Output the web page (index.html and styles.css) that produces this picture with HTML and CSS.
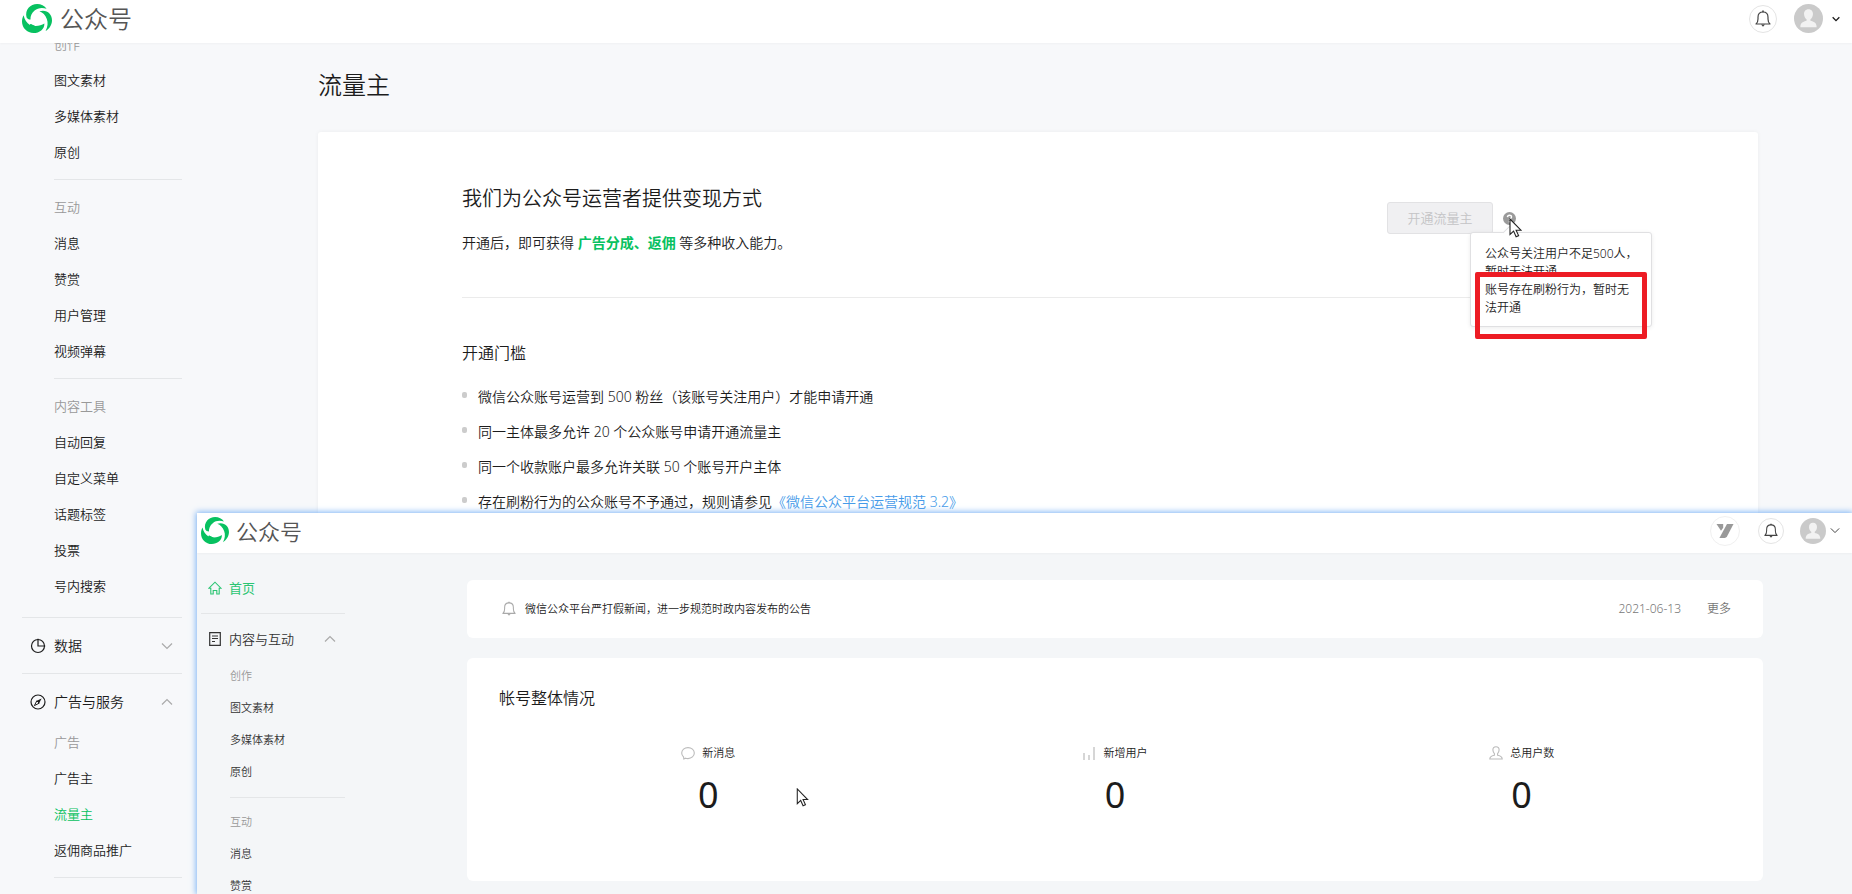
FILE: index.html
```html
<!DOCTYPE html>
<html lang="zh-CN">
<head>
  <meta charset="UTF-8">
  <title>公众号 - 流量主</title>
  <link rel="stylesheet" href="styles.css">
</head>
<body>
  <!-- shared icons -->
  <svg class="sprite" aria-hidden="true">
    <symbol id="icon-logo" viewBox="0 0 30 29">
      <path d="M4.6 13.4C2.6 5.8 8.4 0 15.2 0c3.8 0 7.400 1.800 9.400 4.800C20 3.400 15.600 4 12.600 6.600 9.600 9.100 8.300 12.400 8.500 15.600 6.600 15.400 5.300 14.700 4.600 13.400Z"/>
      <path d="M17.400 7.200C24.600 5 30 9.600 30 16.200c0 4.600-2.600 8.600-6.400 10.800 2.200-4.200 2.600-8.400 1.200-12C23.400 11 20.800 8.400 17.400 7.200Z"/>
      <path d="M1.600 11.200C2.400 15.500 4.800 18.800 8 20.900l.6-.9 4.200 1.900c3.800.2 7-.9 9.600-2.500.2 5.800-5 9.600-10.800 9.600C5 29 0 24 0 17.600c0-2.400.6-4.600 1.600-6.400Z"/>
      <path d="M7.400 24.600 8.400 20l6 2.600Z"/>
    </symbol>
    <symbol id="icon-bell" viewBox="0 0 16 18">
      <path d="M1 14C2.600 12.800 3 11.200 3 9V7.200C3 4 5 2 8 2s5 2 5 5.200V9c0 2.200.4 3.800 2 5Z" fill="none" stroke="currentColor" stroke-width="1.200" stroke-linejoin="round"/>
      <path d="M7.200.6h1.600v1.600H7.200zM6 14.400h4L8 16.800Z" fill="currentColor"/>
    </symbol>
    <symbol id="icon-avatar" viewBox="0 0 30 30">
      <circle cx="15" cy="15" r="15" fill="#cacaca"/>
      <path d="M15 5.500c-3 0-4.800 2.200-4.600 5.200.1 2.200 1.200 4.200 2.600 5.200v1.500c-3.400.8-6.400 2-6.400 6.600h16.800c0-4.600-3-5.800-6.400-6.600v-1.500c1.400-1 2.500-3 2.600-5.200.2-3-1.600-5.200-4.600-5.200Z" fill="#f2f2f2"/>
    </symbol>
    <symbol id="icon-down" viewBox="0 0 12 8">
      <path d="M1 1.500 6 6.500l5-5" fill="none" stroke="currentColor" stroke-width="1.200"/>
    </symbol>
    <symbol id="icon-caret" viewBox="0 0 12 8">
      <path d="M1 1.500 6 6.500l5-5" fill="none" stroke="currentColor" stroke-width="2"/>
    </symbol>
    <symbol id="icon-up" viewBox="0 0 12 8">
      <path d="M1 6.500 6 1.500l5 5" fill="none" stroke="currentColor" stroke-width="1.200"/>
    </symbol>
    <symbol id="icon-cursor" viewBox="0 0 13 20">
      <path d="M1 1v15.500l3.600-3.400 2.500 5.600 2.500-1.100-2.500-5.400h4.800Z" fill="#fff" stroke="#222" stroke-width="1.100"/>
    </symbol>
  </svg>

  <header class="header">
    <a class="brand" href="#"><svg class="brand-logo"><use href="#icon-logo"/></svg>公众号</a>
    <div class="header-tools">
      <button class="round-btn" aria-label="通知"><svg class="bell"><use href="#icon-bell"/></svg></button>
      <button class="account" aria-label="账号"><svg class="avatar"><use href="#icon-avatar"/></svg><svg class="caret"><use href="#icon-caret"/></svg></button>
    </div>
  </header>

  <div class="layout">
    <nav class="menu">
      <ul class="menu-group">
        <li class="menu-label">创作</li>
        <li><a href="#">图文素材</a></li>
        <li><a href="#">多媒体素材</a></li>
        <li><a href="#">原创</a></li>
      </ul>
      <ul class="menu-group">
        <li class="menu-label">互动</li>
        <li><a href="#">消息</a></li>
        <li><a href="#">赞赏</a></li>
        <li><a href="#">用户管理</a></li>
        <li><a href="#">视频弹幕</a></li>
      </ul>
      <ul class="menu-group last">
        <li class="menu-label">内容工具</li>
        <li><a href="#">自动回复</a></li>
        <li><a href="#">自定义菜单</a></li>
        <li><a href="#">话题标签</a></li>
        <li><a href="#">投票</a></li>
        <li><a href="#">号内搜索</a></li>
      </ul>
      <button class="menu-title">
        <svg class="menu-icon" viewBox="0 0 16 16"><path d="M8 .8V8h7.200" fill="none" stroke="currentColor" stroke-width="1.200"/><circle cx="8" cy="8" r="6.500" fill="none" stroke="currentColor" stroke-width="1.200"/></svg>
        <span>数据</span>
        <svg class="fold"><use href="#icon-down"/></svg>
      </button>
      <button class="menu-title">
        <svg class="menu-icon" viewBox="0 0 16 16"><circle cx="8" cy="8" r="7" fill="none" stroke="currentColor" stroke-width="1.200"/><path d="M11.600 4.400 9.200 9.200 6.800 6.800Z" fill="currentColor"/><path d="M4.400 11.600 6.800 6.800 9.200 9.200Z" fill="none" stroke="currentColor"/></svg>
        <span>广告与服务</span>
        <svg class="fold"><use href="#icon-up"/></svg>
      </button>
      <ul class="menu-group nested">
        <li class="menu-label">广告</li>
        <li><a href="#">广告主</a></li>
        <li><a class="active" href="#">流量主</a></li>
        <li><a href="#">返佣商品推广</a></li>
      </ul>
    </nav>

    <main class="main">
      <h1 class="page-title">流量主</h1>
      <section class="panel">
        <div class="intro">
          <div>
            <h2>我们为公众号运营者提供变现方式</h2>
            <p>开通后，即可获得 <strong>广告分成、返佣</strong> 等多种收入能力。</p>
          </div>
          <div class="apply">
            <button class="apply-btn" disabled>开通流量主</button>
            <div class="help">
              <svg class="help-icon" viewBox="0 0 14 14"><circle cx="7" cy="7" r="7" fill="#9a9a9a"/><path d="M4.800 5.500C4.900 2.800 9.200 2.800 9.200 5.400 9.200 7 7 7 7 8.600M7 9.800v1.400" fill="none" stroke="#fff" stroke-width="1.500"/></svg>
              <div class="popover">
                <p>公众号关注用户不足500人，暂时无法开通</p>
                <p>账号存在刷粉行为，暂时无法开通</p>
                <div class="mark"></div>
              </div>
              <svg class="cursor"><use href="#icon-cursor"/></svg>
            </div>
          </div>
        </div>
        <div class="rules">
          <h3>开通门槛</h3>
          <ul>
            <li>微信公众账号运营到 500 粉丝（该账号关注用户）才能申请开通</li>
            <li>同一主体最多允许 20 个公众账号申请开通流量主</li>
            <li>同一个收款账户最多允许关联 50 个账号开户主体</li>
            <li>存在刷粉行为的公众账号不予通过，规则请参见<a href="#">《微信公众平台运营规范 3.2》</a></li>
          </ul>
        </div>
      </section>
    </main>
  </div>

  <!-- second window, on top of the page -->
  <div class="window">
    <header class="header">
      <a class="brand" href="#"><svg class="brand-logo"><use href="#icon-logo"/></svg>公众号</a>
      <div class="header-tools">
        <button class="round-btn service" aria-label="服务"><svg viewBox="0 0 18 16"><path d="M.5 1h6.700v3.800l-2.200 3Z" fill="#999"/><path d="M11 1h6.500L11 13.600Q10.200 15 8.600 15H3.400Z" fill="#999"/></svg></button>
        <button class="round-btn" aria-label="通知"><svg class="bell"><use href="#icon-bell"/></svg></button>
        <button class="account" aria-label="账号"><svg class="avatar"><use href="#icon-avatar"/></svg><svg class="caret"><use href="#icon-down"/></svg></button>
      </div>
    </header>
    <div class="layout">
      <nav class="menu">
        <a class="menu-title home" href="#">
          <svg class="menu-icon" viewBox="0 0 14 14"><path d="M1 7.200 7 1.200l6 6h-1.800V13H8.800V9.500H5.200V13H2.800V7.200Z" fill="none" stroke="currentColor" stroke-width="1.100"/></svg>
          <span>首页</span>
        </a>
        <button class="menu-title">
          <svg class="menu-icon" viewBox="0 0 14 14"><path d="M1.700.7h10.600v12.600H1.700ZM4 4h6M4 6.500h6M4 9.500h3" fill="none" stroke="currentColor" stroke-width="1.200"/></svg>
          <span>内容与互动</span>
          <svg class="fold"><use href="#icon-up"/></svg>
        </button>
        <ul class="menu-group">
          <li class="menu-label">创作</li>
          <li><a href="#">图文素材</a></li>
          <li><a href="#">多媒体素材</a></li>
          <li><a href="#">原创</a></li>
        </ul>
        <ul class="menu-group">
          <li class="menu-label">互动</li>
          <li><a href="#">消息</a></li>
          <li><a href="#">赞赏</a></li>
        </ul>
      </nav>
      <main class="main">
        <section class="card notice">
          <svg class="bell"><use href="#icon-bell"/></svg>
          <a class="notice-text" href="#">微信公众平台严打假新闻，进一步规范时政内容发布的公告</a>
          <time datetime="2021-06-13">2021-06-13</time>
          <a href="#">更多</a>
        </section>
        <section class="card overview">
          <h2>帐号整体情况</h2>
          <dl class="stats">
            <div>
              <dt><svg viewBox="0 0 14 14"><path d="M2.800 13 2.600 11C1.400 10 .7 8.600.7 7 .7 3.900 3.500 1.600 7 1.600s6.300 2.300 6.300 5.400-2.800 5.600-6.300 5.600c-.9 0-1.700-.1-2.400-.4Z" fill="none" stroke="#bbb" stroke-width="1.100"/></svg>新消息</dt>
              <dd>0</dd>
            </div>
            <div>
              <dt><svg viewBox="0 0 14 14"><path d="M2 7v7M7 9v5M12 1v13" fill="none" stroke="#bbb" stroke-width="1.200"/></svg>新增用户</dt>
              <dd>0</dd>
            </div>
            <div>
              <dt><svg viewBox="0 0 14 14"><path d="M7 .8C4.900.8 3.800 2.200 3.900 4c.1 1.500.6 2.700 1.500 3.600v1.600C3 9.800.8 10.200.8 13h12.400c0-2.800-2.200-3.200-4.600-3.800V7.600c.9-.9 1.400-2.100 1.500-3.600C10.200 2.200 9.100.8 7 .8Z" fill="none" stroke="#bbb" stroke-width="1.100"/></svg>总用户数</dt>
              <dd>0</dd>
            </div>
          </dl>
        </section>
      </main>
    </div>
    <svg class="cursor"><use href="#icon-cursor"/></svg>
  </div>
</body>
</html>
```
FILE: styles.css
```css
* {
  box-sizing: border-box;
}
body {
  margin: 0;
  height: 100vh;
  overflow: hidden;
  position: relative;
  background: #f7f8fa;
  color: #1c1c1c;
  font: 350 14px/20px "Noto Sans", "Noto Sans CJK SC", sans-serif;
}
h1, h2, h3, p, ul, dl, dd {
  margin: 0;
  padding: 0;
  font-weight: inherit;
}
ul {
  list-style: none;
}
a {
  color: inherit;
  text-decoration: none;
}
button {
  padding: 0;
  border: 0;
  background: none;
  color: inherit;
  font: inherit;
}
svg {
  display: block;
  flex: none;
}
.sprite {
  position: absolute;
  width: 0;
  height: 0;
}

/* header */
.header {
  display: flex;
  align-items: center;
  justify-content: space-between;
  height: 43px;
  padding: 0 12px 6px 22px;
  position: relative;
  z-index: 1;
  background: #fff;
  box-shadow: 0 1px 2px rgba(0, 0, 0, 0.03);
}
.brand {
  display: flex;
  align-items: center;
  gap: 8px;
  color: #555;
  font-size: 24px;
  line-height: 36px;
}
.brand-logo {
  width: 30px;
  height: 29px;
  fill: #07c160;
}
.header-tools {
  display: flex;
  align-items: center;
  gap: 17px;
}
.round-btn {
  display: flex;
  align-items: center;
  justify-content: center;
  width: 28px;
  height: 28px;
  border: 1px solid #e4e4e4;
  border-radius: 50%;
  color: #444;
}
.bell {
  width: 16px;
  height: 18px;
}
.account {
  display: flex;
  align-items: center;
  gap: 9px;
}
.avatar {
  width: 29px;
  height: 29px;
}
.caret {
  width: 8px;
  height: 6px;
}

/* side menu */
.layout {
  display: flex;
}
.menu {
  flex: none;
  width: 160px;
  margin: -17px 0 0 22px;
}
.menu-group {
  margin: 0 0 9px 32px;
  padding-bottom: 9px;
  border-bottom: 1px solid #e4e6e8;
  font-size: 13px;
  line-height: 36px;
}
.menu-group.last {
  margin-bottom: 0;
  padding-bottom: 13px;
  border: 0;
}
.menu-group.nested {
  margin-top: -5px;
}
.menu-label {
  color: #999;
}
.menu .active,
.menu .home {
  color: #07c160;
}
.menu-title {
  display: flex;
  align-items: center;
  gap: 8px;
  width: 100%;
  height: 56px;
  padding: 0 9px 0 8px;
  border-top: 1px solid #e4e6e8;
  text-align: left;
}
.menu-icon {
  width: 16px;
  height: 16px;
}
.menu-title span {
  flex: 1;
}
.fold {
  width: 12px;
  height: 8px;
  color: #aaa;
}

/* traffic owner page */
.main {
  flex: 1;
}
.layout > .main {
  padding: 24px 94px 0 136px;
}
.page-title {
  font-size: 24px;
  line-height: 36px;
}
.panel {
  margin-top: 29px;
  padding: 0 144px;
  min-height: 800px;
  border-radius: 3px;
  background: #fff;
  box-shadow: 0 0 4px rgba(0, 0, 0, 0.05);
}
.intro {
  display: flex;
  justify-content: space-between;
  padding: 52px 0 44px;
  border-bottom: 1px solid #ebebeb;
}
.intro h2 {
  font-size: 20px;
  line-height: 30px;
}
.intro p {
  margin-top: 19px;
}
.intro strong {
  color: #07c160;
  font-weight: 700;
}
.apply {
  display: flex;
  align-items: center;
  gap: 10px;
  height: 32px;
  margin: 18px 98px 0 0;
}
.apply-btn {
  width: 106px;
  height: 32px;
  border: 1px solid #e2e2e4;
  border-radius: 3px;
  background: #f0f0f2;
  color: #c4c4c6;
  font-size: 13px;
}
.help {
  position: relative;
}
.help-icon {
  width: 13px;
  height: 13px;
}
.popover {
  position: absolute;
  top: 20px;
  left: -33px;
  width: 182px;
  padding: 12px 12px 9px 14px;
  border: 1px solid #e0e0e2;
  border-radius: 3px;
  background: #fff;
  box-shadow: 0 1px 4px rgba(0, 0, 0, 0.08);
}
/* pointer of the popover */
.popover::before {
  content: "";
  position: absolute;
  top: -6px;
  left: 34px;
  width: 10px;
  height: 10px;
  border: solid #e0e0e2;
  border-width: 1px 0 0 1px;
  background: #fff;
  transform: rotate(45deg);
}
.popover .mark {
  position: absolute;
  top: 39px;
  left: 4px;
  width: 172px;
  height: 67px;
  border: 5px solid #ed1c24;
  border-radius: 2px;
}
.intro .popover p {
  margin: 0;
  font-size: 12px;
  line-height: 18px;
}
.cursor {
  position: absolute;
  width: 13px;
  height: 20px;
}
.help .cursor {
  top: 6px;
  left: 6px;
}
.rules {
  padding-top: 43px;
}
.rules h3 {
  font-size: 16px;
  line-height: 24px;
}
.rules ul {
  margin-top: 14px;
}
.rules li {
  display: flex;
  align-items: center;
  line-height: 35px;
}
.rules li::before {
  content: "";
  width: 5px;
  height: 6px;
  margin: 0 11px 3px 0;
  border-radius: 2px;
  background: #ccc;
}
.rules a {
  color: #459ae9;
}

/* second window */
.window {
  position: absolute;
  top: 513px;
  right: 0;
  bottom: 0;
  left: 197px;
  z-index: 2;
  background: #f4f6f8;
  box-shadow: 0 0 6px 1px #7db4f5;
}
.window .header {
  height: 40px;
  padding: 0 12px 5px 4px;
}
.window .brand {
  gap: 7px;
  font-size: 22px;
}
.window .brand-logo {
  width: 28px;
  height: 27px;
}
.window .header-tools {
  gap: 16px;
}
.window .round-btn {
  width: 26px;
  height: 26px;
}
.window .round-btn.service {
  width: 30px;
  height: 30px;
  margin-right: 2px;
  border-color: #f0f0f0;
}
.service svg {
  width: 18px;
  height: 16px;
}
.window .bell {
  width: 14px;
  height: 16px;
}
.window .account {
  gap: 4px;
  color: #444;
}
.window .avatar {
  width: 26px;
  height: 26px;
}
.window .caret {
  width: 10px;
  height: 7px;
}
.window .menu {
  width: 144px;
  margin: 9px 0 0 4px;
  color: #333;
}
.window .menu-title {
  gap: 7px;
  height: 51px;
  padding-left: 7px;
  font-size: 13px;
}
.window .menu .home {
  border: 0;
  color: #2bc573;
  font-weight: 400;
}
.window .menu-icon {
  width: 14px;
  height: 14px;
}
.window .menu-group {
  margin: -4px 0 8px 29px;
  padding-bottom: 9px;
  font-size: 11px;
  line-height: 32px;
}
.window .menu-group + .menu-group {
  margin-top: 0;
}
.window .menu-group:last-child {
  margin-bottom: 0;
  padding-bottom: 0;
  border: 0;
}
.window .main {
  padding: 27px 89px 0 122px;
}
.card {
  border-radius: 6px;
  background: #fff;
}
.notice {
  display: flex;
  align-items: center;
  height: 58px;
  padding: 0 32px 0 35px;
  color: #777;
  font-size: 12px;
}
.notice .bell {
  margin-right: 9px;
  color: #aaa;
}
.notice-text {
  flex: 1;
  color: #222;
  font-size: 11px;
}
.notice time {
  margin-right: 26px;
}
.overview {
  margin-top: 20px;
  padding: 28px 38px 62px;
}
.overview h2 {
  margin-left: -6px;
  font-size: 16px;
  line-height: 24px;
}
.stats {
  display: grid;
  grid-template-columns: repeat(3, 1fr);
  margin-top: 33px;
  text-align: center;
}
.stats dt {
  display: flex;
  justify-content: center;
  align-items: center;
  gap: 7px;
  font-size: 11px;
}
.stats dt svg {
  width: 14px;
  height: 14px;
}
.stats dd {
  margin-top: 8px;
  font-size: 36px;
  font-weight: 400;
  line-height: 48px;
}
.window > .cursor {
  top: 275px;
  left: 599px;
  height: 19px;
}
```
